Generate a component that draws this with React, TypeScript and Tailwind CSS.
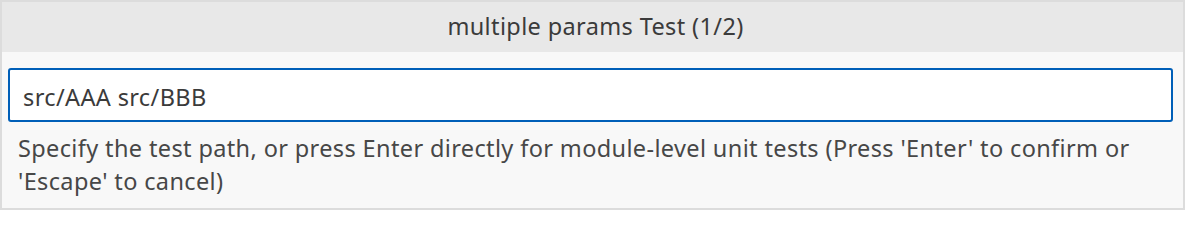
import React, { useState } from 'react';

export default function App() {
  const [value, setValue] = useState('src/AAA src/BBB');

  return (
    <div
      className="w-[1185px] h-[210px] border-2 border-[#dcdcdc] bg-[#f8f8f8] flex flex-col text-[#3b3b3b]"
      style={{ fontFamily: '"Noto Sans", "Open Sans", sans-serif' }}
    >
      <div className="h-[50px] shrink-0 bg-[#e8e8e8] flex items-center justify-center pl-[6px] text-[23.5px] tracking-[0.37px]">
        multiple params Test (1/2)
      </div>

      <div className="pt-4 pl-[6px] pr-[10px]">
        <input
          type="text"
          value={value}
          onChange={(e) => setValue(e.target.value)}
          className="w-full h-[54px] bg-white border-2 border-[#005fb8] rounded-[3px] pl-[13px] pt-[4px] text-[23.5px] tracking-[0.37px] text-[#3b3b3b] outline-none"
        />
      </div>

      <div className="pl-[16px] pr-[30px] pt-[10px] text-[23.5px] tracking-[0.37px] leading-[33px] text-[#474747]">
        Specify the test path, or press Enter directly for module-level unit tests (Press 'Enter' to confirm or 'Escape' to cancel)
      </div>
    </div>
  );
}
